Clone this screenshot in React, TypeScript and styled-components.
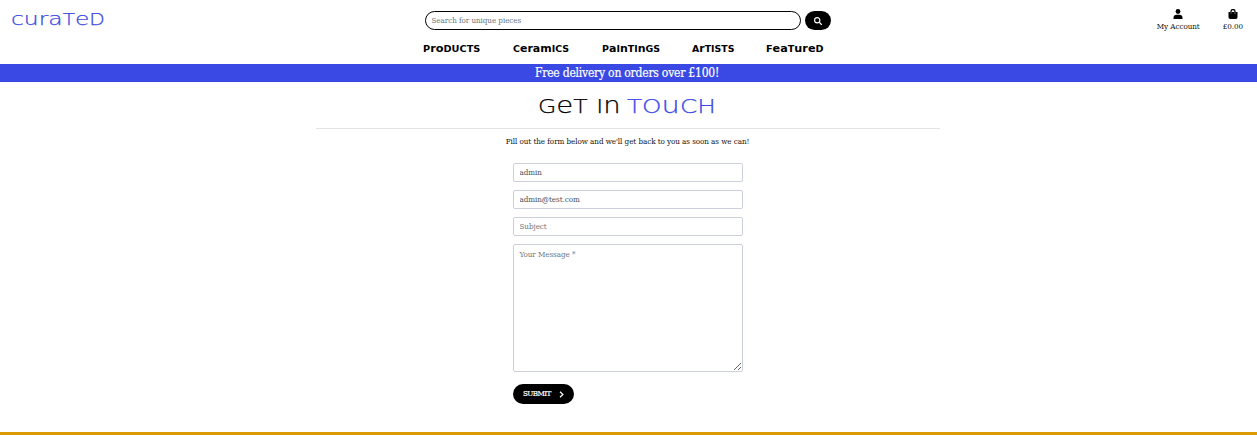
import React from "react";
import styled, { createGlobalStyle } from "styled-components";

const GlobalStyle = createGlobalStyle`
  *, *::before, *::after { box-sizing: border-box; }
  body {
    margin: 0;
    background: #fff;
    color: #111;
    font-family: "DejaVu Serif Condensed", "DejaVu Serif", serif;
    font-stretch: condensed;
    font-size: 8px;
    line-height: 12px;
    letter-spacing: -0.06px;
  }
  input, textarea, button { font: inherit; letter-spacing: inherit; }
`;

const Page = styled.div`
  height: 435px;
  display: flex;
  flex-direction: column;
  overflow: hidden;
`;

const Header = styled.header`
  height: 64px;
  flex: none;
  display: grid;
  grid-template-columns: 423px 1fr 423px;
`;

const Logo = styled.a`
  padding: 8px 0 0 11px;
  color: #3a49e3;
`;

const Middle = styled.div`
  display: flex;
  flex-direction: column;
`;

const Search = styled.form`
  display: flex;
  gap: 4px;
  padding: 11px 0 0 2px;
`;

const SearchInput = styled.input`
  width: 376px;
  height: 19px;
  padding: 0 5.5px;
  border: 1px solid #000;
  border-radius: 10px;
  outline: none;
  background: #fff;
  &::placeholder { color: #6c757d; opacity: 1; }
`;

const SearchButton = styled.button`
  width: 26px;
  height: 19px;
  padding: 0 1px 0 0;
  display: flex;
  align-items: center;
  justify-content: center;
  border: 0;
  border-radius: 10px;
  background: #000;
  color: #fff;
`;

const Nav = styled.nav`
  display: flex;
  gap: 32px;
  padding-top: 12px;
  color: #000;
`;

const UnicaseText = styled.span<{ $size: number; $width: number; $stretch: number; $bold?: boolean }>`
  display: block;
  width: ${(p) => p.$width}px;
  height: ${(p) => p.$size * 1.2}px;
  line-height: ${(p) => p.$size * 1.2}px;
  white-space: nowrap;
  letter-spacing: 0;
  font-family: ${(p) => (p.$bold ? '"DejaVu Sans"' : '"DejaVu Sans Light", "DejaVu Sans"')}, sans-serif;
  font-stretch: normal;
  font-weight: ${(p) => (p.$bold ? 700 : 200)};
  font-size: ${(p) => p.$size}px;
  -webkit-text-stroke: ${(p) => (p.$bold ? "0" : "0.25px currentColor")};
  transform: scaleX(${(p) => p.$stretch});
  transform-origin: left center;
`;

const Capital = styled.span`
  font-size: 0.86em;
`;

type UnicaseProps = { text: string; size: number; width: number; stretch?: number; bold?: boolean };

/* Capitals are reduced to the height of the lowercase letters. */
function Unicase({ text, size, width, stretch = 1, bold }: UnicaseProps) {
  return (
    <UnicaseText $size={size} $width={width} $stretch={stretch} $bold={bold}>
      {text.split(/([A-Z]+)/).map((part, i) =>
        /[A-Z]/.test(part) ? <Capital key={i}>{part}</Capital> : part
      )}
    </UnicaseText>
  );
}

const Account = styled.div`
  display: flex;
  justify-content: flex-end;
  gap: 23px;
  padding: 9px 14px 0 0;
`;

const AccountLink = styled.a`
  display: flex;
  flex-direction: column;
  align-items: center;
  svg { display: block; }
  span { margin-top: 2px; white-space: nowrap; }
`;

const Banner = styled.div`
  height: 18px;
  flex: none;
  padding-right: 3px;
  background: #3a49e3;
  color: #fff;
  text-align: center;
  font-size: 12px;
  letter-spacing: -0.22px;
  -webkit-text-stroke: 0.2px currentColor;
  line-height: 18px;
`;

const Main = styled.main`
  flex: 1;
  width: 624px;
  margin-left: 316px;
  display: flex;
  flex-direction: column;
`;

const Title = styled.h1`
  height: 46px;
  margin: 0;
  padding: 10px 0 0 222px;
  display: flex;
  gap: 8px;
  color: #000;
`;

const Accent = styled.span`
  color: #3a49e3;
`;

const Intro = styled.p`
  margin: 0;
  padding: 7px 1px 0 0;
  height: 35px;
  border-top: 1px solid #e3e3e3;
  text-align: center;
`;

const ContactForm = styled.form`
  width: 230px;
  margin-left: 197px;
  display: flex;
  flex-direction: column;
  gap: 8px;
`;

const Field = styled.input`
  height: 19px;
  padding: 0 5.5px;
  border: 1px solid #cbd0dc;
  border-radius: 2px;
  color: #495057;
  outline: none;
  &::placeholder { color: #6c757d; opacity: 1; }
`;

const Message = styled.textarea`
  height: 128px;
  padding: 4px 5.5px;
  border: 1px solid #cbd0dc;
  border-radius: 2px;
  outline: none;
  resize: both;
  &::placeholder { color: #6c757d; opacity: 1; }
`;

const Submit = styled.button`
  width: 61px;
  height: 20px;
  margin-top: 4px;
  padding: 0 10px;
  display: flex;
  align-items: center;
  justify-content: space-between;
  letter-spacing: -0.6px;
  -webkit-text-stroke: 0.2px currentColor;
  border: 0;
  border-radius: 10px;
  background: #000;
  color: #fff;
`;

const Footer = styled.footer`
  height: 3px;
  flex: none;
  background: #dc9a04;
`;

const links = [
  { text: "ProDUCTS", width: 58, stretch: 1.03 },
  { text: "CeramICS", width: 57, stretch: 1.0 },
  { text: "PaInTInGS", width: 58, stretch: 1.0 },
  { text: "ArTISTS", width: 42, stretch: 0.99 },
  { text: "FeaTureD", width: 58, stretch: 1.02 },
];

export default function App() {
  return (
    <>
      <GlobalStyle />
      <Page>
        <Header>
          <Logo>
            <Unicase text="curaTeD" size={18.3} width={93} stretch={1.28} />
          </Logo>
          <Middle>
            <Search>
              <SearchInput placeholder="Search for unique pieces" />
              <SearchButton type="button" aria-label="Search">
                <svg width="8" height="8" viewBox="0 0 16 16" fill="none" stroke="currentColor" strokeWidth="2.2">
                  <circle cx="6.5" cy="6.5" r="5.3" />
                  <path d="M10.5 10.5 15 15" strokeLinecap="round" />
                </svg>
              </SearchButton>
            </Search>
            <Nav>
              {links.map((l) => (
                <Unicase key={l.text} text={l.text} size={11} width={l.width} stretch={l.stretch} bold />
              ))}
            </Nav>
          </Middle>
          <Account>
            <AccountLink>
              <svg width="10" height="10" viewBox="0 0 20 20">
                <circle cx="10" cy="5" r="4.8" />
                <path d="M1 20v-2.500c0-4 2.500-6 6-6h6c3.500 0 6 2 6 6V20z" />
              </svg>
              <span>My Account</span>
            </AccountLink>
            <AccountLink>
              <svg width="10" height="10" viewBox="0 0 20 20">
                <path d="M1 6h18v10.500a3.500 3.500 0 0 1-3.500 3.500h-11A3.500 3.500 0 0 1 1 16.500z" />
                <path d="M6 9V5a4 4 0 0 1 8 0v4" fill="none" stroke="#000" strokeWidth="2.500" />
                <path d="M6 7v2M14 7v2" stroke="#fff" strokeWidth="1.500" />
              </svg>
              <span>£0.00</span>
            </AccountLink>
          </Account>
        </Header>
        <Banner>Free delivery on orders over £100!</Banner>
        <Main>
          <Title>
            <Unicase text="GeT In" size={22.5} width={81} stretch={1.22} />
            <Accent>
              <Unicase text="TOuCH" size={22.5} width={90} stretch={1.28} />
            </Accent>
          </Title>
          <Intro>Fill out the form below and we'll get back to you as soon as we can!</Intro>
          <ContactForm>
            <Field defaultValue="admin" />
            <Field defaultValue="admin@test.com" />
            <Field placeholder="Subject" />
            <Message placeholder="Your Message *" />
            <Submit type="button">
              SUBMIT
              <svg width="5" height="7" viewBox="0 0 5 7" fill="none" stroke="currentColor" strokeWidth="1.200">
                <path d="M1 .7 3.900 3.500 1 6.300" />
              </svg>
            </Submit>
          </ContactForm>
        </Main>
        <Footer />
      </Page>
    </>
  );
}
